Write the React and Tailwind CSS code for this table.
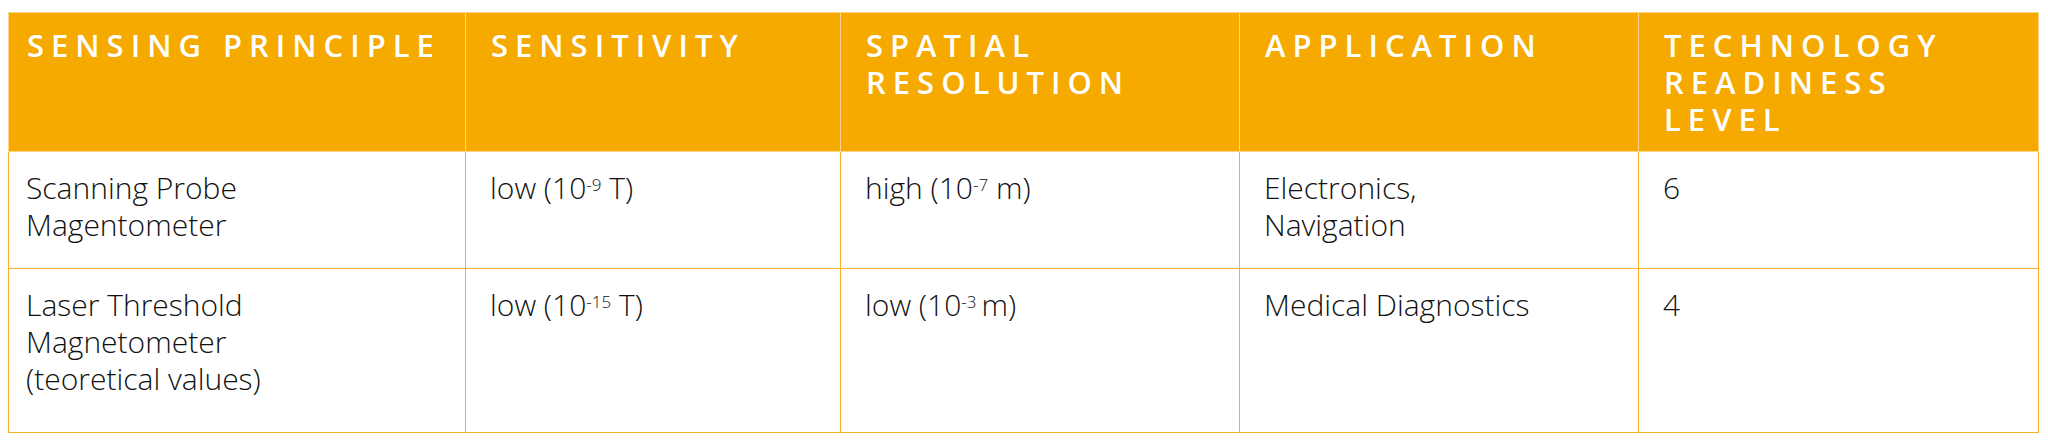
const headers = [
  { text: "SENSING PRINCIPLE", max: "max-w-none" },
  { text: "SENSITIVITY", max: "max-w-none" },
  { text: "SPATIAL RESOLUTION", max: "max-w-[320px]" },
  { text: "APPLICATION", max: "max-w-none" },
  { text: "TECHNOLOGY READINESS LEVEL", max: "max-w-[320px]" },
];

const Pow = ({ base = "10", exp }) => (
  <>
    {base}
    <sup className="text-[17px]">{exp}</sup>
  </>
);

const rows = [
  {
    h: "h-[117px]",
    cells: [
      ["Scanning Probe", "Magentometer"],
      [<>low (<Pow exp="-9" /> T)</>],
      [<>high (<Pow exp="-7" /> m)</>],
      ["Electronics,", "Navigation"],
      ["6"],
    ],
  },
  {
    h: "h-[164px]",
    cells: [
      ["Laser Threshold", "Magnetometer", "(teoretical values)"],
      [<>low (<Pow exp="-15" /> T)</>],
      [<>low (<Pow exp="-3" />&thinsp;m)</>],
      ["Medical Diagnostics"],
      ["4"],
    ],
  },
];

const widths = ["w-[457px]", "w-[375px]", "w-[399px]", "w-[399px]", "w-[400px]"];

export default function App() {
  return (
    <div className="w-[2048px] h-[442px] bg-white pt-[12px] pl-[8px] font-['Open_Sans',sans-serif]">
      <table className="table-fixed border-collapse w-[2030px]">
        <colgroup>
          {widths.map((w, i) => (
            <col key={i} className={w} />
          ))}
        </colgroup>
        <thead>
          <tr className="h-[139px] bg-[#f6aa00]">
            {headers.map((h, i) => (
              <th
                key={i}
                className={`align-top text-left pt-[14px] ${i === 0 ? "pl-[18px]" : "pl-[25px]"} border border-[#fbd58a] text-white font-semibold text-[31px] leading-[37px] tracking-[7px]`}
              >
                <p className={h.max}>{h.text}</p>
              </th>
            ))}
          </tr>
        </thead>
        <tbody>
          {rows.map((row, r) => (
            <tr key={r} className={row.h}>
              {row.cells.map((lines, i) => (
                <td
                  key={i}
                  className={`align-top pt-[17px] pr-4 ${i === 0 ? "pl-[17px]" : "pl-[24px]"} border border-[#f7b123] text-[#111] font-light text-[30px] leading-[37px] whitespace-nowrap`}
                >
                  {lines.map((l, k) => (
                    <div key={k}>{l}</div>
                  ))}
                </td>
              ))}
            </tr>
          ))}
        </tbody>
      </table>
    </div>
  );
}
